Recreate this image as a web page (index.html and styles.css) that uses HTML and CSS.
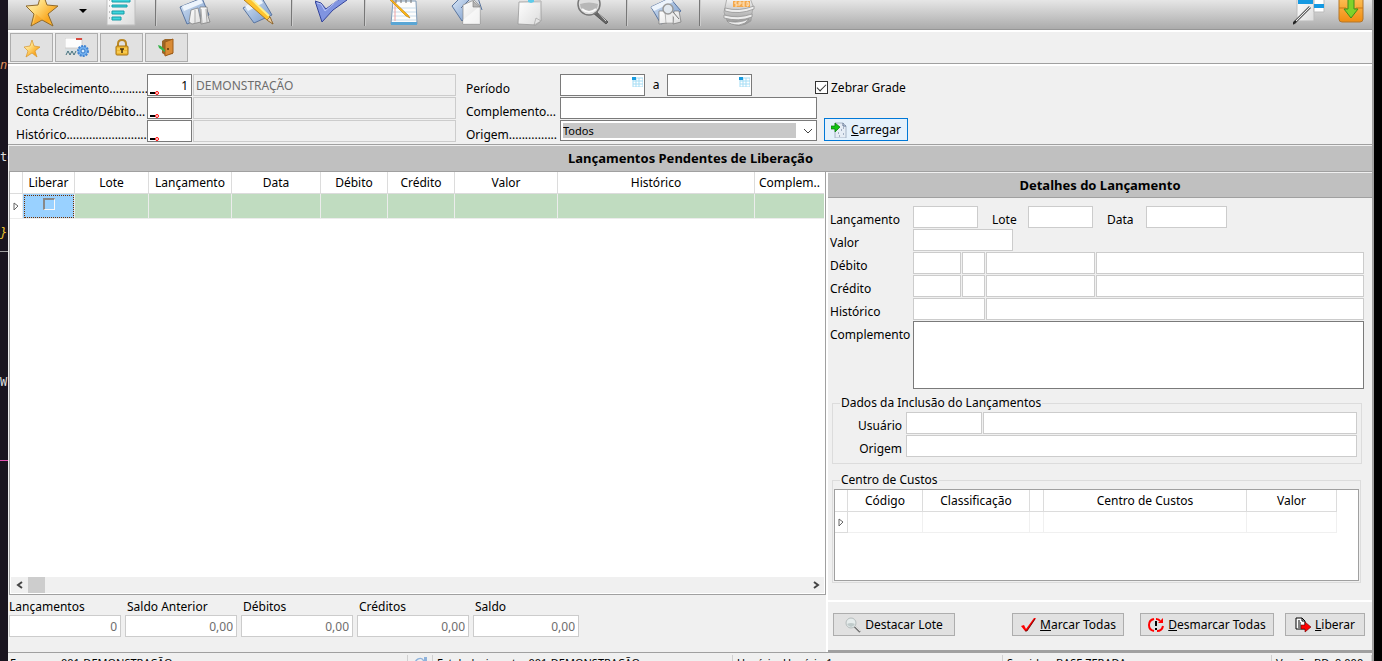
FILE: index.html
```html
<!DOCTYPE html>
<html lang="pt-BR">
<head>
<meta charset="utf-8">
<title>Lançamentos Pendentes de Liberação</title>
<link rel="stylesheet" href="styles.css">
</head>
<body>
<svg class="defs" aria-hidden="true">
  <defs>
    <linearGradient id="gold" x1="0" y1="0" x2="1" y2="1"><stop offset="0" stop-color="#fff6d8"/><stop offset=".4" stop-color="#ffdd7e"/><stop offset=".75" stop-color="#f9a51c"/><stop offset="1" stop-color="#ffc94f"/></linearGradient>
    <linearGradient id="blue" x1="0" y1="0" x2="1" y2="1"><stop offset="0" stop-color="#dce9f8"/><stop offset="1" stop-color="#7396c8"/></linearGradient>
    <linearGradient id="paper" x1="0" y1="0" x2="1" y2="1"><stop offset="0" stop-color="#ffffff"/><stop offset="1" stop-color="#dcdcdc"/></linearGradient>
    <linearGradient id="steel" x1="0" y1="0" x2="0" y2="1"><stop offset="0" stop-color="#f8f8f8"/><stop offset="1" stop-color="#909090"/></linearGradient>
    <linearGradient id="amber" x1="0" y1="0" x2="0" y2="1"><stop offset="0" stop-color="#ffc860"/><stop offset="1" stop-color="#f08c10"/></linearGradient>
  </defs>
</svg>
<div class="desktop">
  <aside class="editor" aria-hidden="true">
    <span class="editor-orange">n</span>
    <span class="editor-plain">to</span>
    <span class="editor-brace">}</span>
    <span class="editor-rule"></span>
    <span class="editor-word">Wh</span>
    <span class="editor-pink"></span>
  </aside>

  <div class="window">
    <nav class="toolbar" aria-label="Barra principal">
      <div class="group">
        <button class="tool tool-star" aria-label="Favoritos"><svg viewBox="0 0 32 30"><path d="M16-9l5 14 11 1-10 8 5 12-11-6-11 6 3-12-8-8 12-1z" fill="url(#gold)" stroke="#8f6a2c" stroke-width="1"/><path d="M16 19l-9 6 3-11z" fill="#f39a18" opacity=".5"/></svg></button>
        <button class="tool tool-arrow" aria-label="Abrir favoritos"><svg viewBox="0 0 32 30"><path d="M12 9h8l-4 4z" fill="#000"/></svg></button>
        <button class="tool tool-sheet" aria-label="Relatório"><svg viewBox="0 0 32 30"><path d="M2-2h28v27H2z" fill="url(#paper)" stroke="#bdbdbd"/><path d="M7-2h18v4H7zM7 5h15v2H7zM7 11h12v3H7zM7 17h9v3H7z" fill="#3fd5dc" stroke="#169ca8"/><path d="M4 0h1M4 6h1M4 12h1M4 18h1" stroke="#888"/></svg></button>
      </div>
      <div class="group">
        <button class="tool" aria-label="Abrir"><svg viewBox="0 0 32 30"><path d="M1 7L23-2l7 17-22 9z" fill="url(#blue)" stroke="#5a75a0"/><path d="M3 6l19-7 2 4-19 8z" fill="#edf4fc"/><path d="M12 10l7-2 3 14-9 2-3-2z" fill="url(#paper)" stroke="#777" stroke-width=".7"/><path d="M21 7h7l1 9 2 6-9 2z" fill="url(#paper)" stroke="#777" stroke-width=".7"/><path d="M16 10v13M22 9l1 14M27 9l1 13" stroke="#aaa"/></svg></button>
        <button class="tool" aria-label="Editar"><svg viewBox="0 0 32 30"><path d="M1 8L20-2l10 17-18 8z" fill="url(#blue)" stroke="#5a75a0"/><path d="M3 6l15-8 3 5-15 8z" fill="#eef4fb"/><path d="M7-2l-5 2 23 20 6 4-3-7z" fill="#ffc42e" stroke="#a3680d" stroke-width=".8"/><path d="M8-2l19 18" stroke="#fff08a" stroke-width="2"/><path d="M28 17l3 7-6-4z" fill="#eccb9c" stroke="#70502b" stroke-width=".6"/></svg></button>
      </div>
      <div class="group">
        <button class="tool" aria-label="Confirmar"><svg viewBox="0 0 32 30"><path d="M0 1l6 2 5 6L26-2l6 2-14 10-11 12z" fill="#8094e0" stroke="#34449a"/><path d="M2 3l4 1 4 7L24-1" fill="none" stroke="#b8c5f7"/></svg></button>
      </div>
      <div class="group">
        <button class="tool" aria-label="Anotações"><svg viewBox="0 0 32 30"><path d="M5 1h23l1 23H3z" fill="#fdfdfd" stroke="#7f9bb8"/><path d="M3 22h26v3H3z" fill="#5aa6d5"/><path d="M5 8h23M5 12h23M4 16h24M4 20h24" stroke="#c9dcea"/><path d="M7 1v20" stroke="#f0a0a0"/><path d="M8-2v5M13-2v5M18-2v5M23-2v5" stroke="#777" stroke-width="1"/><path d="M2-2l18 17 2 3-4-2L0-2z" fill="#ffb913" stroke="#b3750c" stroke-width=".6"/></svg></button>
        <button class="tool" aria-label="Arquivo"><svg viewBox="0 0 32 30"><path d="M1 6l8-8h13v12L11 21z" fill="url(#blue)" stroke="#59759e"/><path d="M10 8L20-2h7l4 12" fill="#d0d6de" stroke="#59759e"/><path d="M12 5l11-5 6 6v18H12z" fill="url(#paper)" stroke="#888" stroke-width=".7"/><path d="M12 20L29 6v18H12z" fill="#fff" opacity=".6"/><path d="M22 1v6h7z" fill="#b5b5b5" stroke="#777" stroke-width=".6"/></svg></button>
        <button class="tool" aria-label="Colar"><svg viewBox="0 0 32 30"><path d="M5 2l22-1v20l-5 4-18-1z" fill="url(#paper)" stroke="#999" stroke-width=".8"/><path d="M6 2h21l-1 20" fill="none" stroke="#c8c8c8"/><path d="M20 25l2-7 5 3z" fill="#e4e4e4" stroke="#999" stroke-width=".6"/><path d="M14-2h6v4l-3 1-3-1z" fill="#5ecbea"/></svg></button>
        <button class="tool" aria-label="Pesquisar"><svg viewBox="0 0 32 30"><path d="M20 11l11 11-2 2-13-11z" fill="#666" stroke="#333" stroke-width=".6"/><path d="M21 12l8 9" stroke="#ddd"/><circle cx="12" cy="4" r="11" fill="#dedede" stroke="#777" stroke-width="1.5"/><path d="M3 4q9-3 18 0a9 9 0 0 1-18 0" fill="#b7b7b7"/><path d="M5 9q7 6 14 0" stroke="#f8f8f8" stroke-width="2" fill="none"/></svg></button>
      </div>
      <div class="group">
        <button class="tool" aria-label="Consultar"><svg viewBox="0 0 32 30"><path d="M1 7L20-2l11 13-20 13z" fill="url(#blue)" stroke="#5a75a0"/><path d="M1 7L20-2l3 4L4 11z" fill="#edf4fc"/><path d="M9 11h6l2 12-8 1zM24 11h5l2 11-8 2z" fill="url(#paper)" stroke="#777" stroke-width=".7"/><path d="M15 12h8v11h-7z" fill="#eee" stroke="#999" stroke-width=".6"/><circle cx="18" cy="9" r="5" fill="#e1e8ef" stroke="#999" stroke-width="1.5"/><path d="M22 13l6 6" stroke="#eee" stroke-width="3"/><path d="M23 12l6 7" stroke="#777"/></svg></button>
      </div>
      <div class="group group-last">
        <button class="tool" aria-label="SPED"><svg viewBox="0 0 32 30"><path d="M4-2h23l3 8-2 15q-12 9-24 0L1 12z" fill="url(#steel)" stroke="#999" stroke-width=".7"/><path d="M2 8q14 4 29-2v3q-15 6-29 2zM1 15q14 4 28-1v3q-13 5-28 1zM4 21q11 3 22-2-3 5-10 6-9 0-12-4z" fill="#ededed" stroke="#8d8d8d" stroke-width=".7"/><path d="M10 1h17v6H10z" fill="#f4a84b"/><path d="M12 6h2V4h-2V2h2M16 6V2h2v2h-2M22 2h-2v4h2M20 4h2M24 2h1l1 2-1 2h-1z" stroke="#fff0d8" stroke-width=".8" fill="none"/></svg></button>
      </div>
      <div class="group group-end">
        <button class="tool tool-end" aria-label="Janelas"><svg viewBox="0 0 32 30"><path d="M4-2h17v23H4z" fill="url(#paper)" stroke="#bbb"/><path d="M5-2h15v6H5z" fill="#1599e2"/><path d="M21-2h10v14H21z" fill="#fff" stroke="#bbb"/><path d="M21 4h10v4H21z" fill="#1599e2"/><path d="M1 23L17 7" stroke="#666" stroke-width="3"/><path d="M3 21L17 7" stroke="#eee"/><path d="M0 24l3-3" stroke="#222" stroke-width="2"/></svg></button>
        <button class="tool tool-end" aria-label="Baixar"><svg viewBox="0 0 32 30"><rect x="4" y="-6" width="24" height="28" rx="3" fill="url(#amber)" stroke="#b4762a"/><path d="M4 8h7l2 5h6l2-5h7" fill="none" stroke="#c77716"/><path d="M13-2h6v11h4l-7 9-7-9h4z" fill="#7fd22a" stroke="#3d8d1c"/></svg></button>
      </div>
    </nav>

    <div class="actions">
      <button class="action" aria-label="Adicionar aos favoritos"><svg viewBox="0 0 24 20"><path d="M12 2l2 6 6 1-5 4 2 6-5-4-6 4 2-6-4-4 6-1z" fill="url(#gold)" stroke="#d9952b" stroke-width=".7"/></svg></button>
      <button class="action" aria-label="Configurar"><svg viewBox="0 0 24 20"><path d="M0 0h17v10H0z" fill="#fdfdfd" stroke="#bbb" stroke-width=".6"/><path d="M11 0h6v2h-6z" fill="#d84a40"/><path d="M0 11h13v4H0z" fill="#d8dfe2"/><path d="M1 17l2-4 2 4 2-4 2 4 2-4" fill="none" stroke="#44707c"/><circle cx="18" cy="13" r="5" fill="#72b0ef" stroke="#4385d2" stroke-width="2" stroke-dasharray="2 1"/><circle cx="18" cy="13" r="2" fill="#d9ecff" stroke="#397bc9"/></svg></button>
      <button class="action" aria-label="Bloquear"><svg viewBox="0 0 24 20"><path d="M8 10V6q0-4 4-4t4 4v4" fill="none" stroke="#b98724" stroke-width="2"/><rect x="6" y="8" width="12" height="9" rx="1" fill="#efb832" stroke="#a77312"/><path d="M7 11h10M7 14h10" stroke="#ffdc72"/><path d="M10 11h4M12 11v4" stroke="#493208" stroke-width="1.5"/></svg></button>
      <button class="action" aria-label="Sair"><svg viewBox="0 0 24 20"><path d="M7 3l3-2h8v15l-8 1-3-2z" fill="#9a6628"/><path d="M10 4l8-3v14l-8 3z" fill="#d98b35" stroke="#9e5c18"/><circle cx="13" cy="11" r="1" fill="#613307"/><path d="M3 7l3 1 4 4v2L4 10z" fill="#37b34a"/></svg></button>
    </div>

    <form class="filters">
      <div class="filter-account">
        <label for="estab">Estabelecimento............</label>
        <span class="lookup"><input id="estab" class="field number" value="1"><svg viewBox="0 0 10 5"><path d="M0 2h5v2H0z" fill="#000"/><circle cx="7" cy="3" r="1.5" fill="#fff" stroke="#f00"/></svg></span>
        <input class="field off" value="DEMONSTRAÇÃO" aria-label="Nome do estabelecimento" disabled>
        <label for="conta">Conta Crédito/Débito...</label>
        <span class="lookup"><input id="conta" class="field number"><svg viewBox="0 0 10 5"><path d="M0 2h5v2H0z" fill="#000"/><circle cx="7" cy="3" r="1.5" fill="#fff" stroke="#f00"/></svg></span>
        <input class="field off" aria-label="Nome da conta" disabled>
        <label for="hist">Histórico.........................</label>
        <span class="lookup"><input id="hist" class="field number"><svg viewBox="0 0 10 5"><path d="M0 2h5v2H0z" fill="#000"/><circle cx="7" cy="3" r="1.5" fill="#fff" stroke="#f00"/></svg></span>
        <input class="field off" aria-label="Nome do histórico" disabled>
      </div>
      <div class="filter-period">
        <label for="inicio">Período</label>
        <div class="period">
          <span class="date"><input id="inicio" class="field"><svg viewBox="0 0 11 10"><path d="M1 1h10v9H1zM1 4h10M1 7h10M4 1v9M7 1v9" fill="#fff" stroke="#a5ddf5"/><path d="M0 0h4v3H0z" fill="#1a9ce0"/></svg></span>
          <label class="until" for="fim">a</label>
          <span class="date"><input id="fim" class="field"><svg viewBox="0 0 11 10"><path d="M1 1h10v9H1zM1 4h10M1 7h10M4 1v9M7 1v9" fill="#fff" stroke="#a5ddf5"/><path d="M0 0h4v3H0z" fill="#1a9ce0"/></svg></span>
          <label class="zebra"><input type="checkbox" checked>Zebrar Grade</label>
        </div>
        <label for="compl">Complemento...</label>
        <input id="compl" class="field">
        <span></span>
        <label for="origem">Origem...............</label>
        <span class="combo"><select id="origem"><option>Todos</option></select><svg viewBox="0 0 10 6"><path d="M1 1l4 4 4-4" fill="none" stroke="#444"/></svg></span>
        <button type="button" class="push load"><svg viewBox="0 0 16 16"><path d="M4 1h8l3 3v12H4z" fill="#e6edf5" stroke="#a6b4c6"/><path d="M12 1v3h3M7 11h1M10 8h1M12 12h1M8 14h1M12 6h1M6 7h1" stroke="#5f7392" fill="none"/><path d="M0 4h4V1l5 4-5 5V7H0z" fill="#12c412" stroke="#087a08" stroke-width=".7"/></svg><span><u>C</u>arregar</span></button>
      </div>
    </form>

    <h1 class="title">Lançamentos Pendentes de Liberação</h1>

    <main class="main">
      <section class="entries">
        <div class="grid">
          <div class="grid-view">
            <table class="entries-table">
              <colgroup><col class="w13"><col class="w52"><col class="w74"><col class="w83"><col class="w89"><col class="w67"><col class="w67"><col class="w103"><col class="w197"><col></colgroup>
              <thead><tr><th></th><th>Liberar</th><th>Lote</th><th>Lançamento</th><th>Data</th><th>Débito</th><th>Crédito</th><th>Valor</th><th>Histórico</th><th>Complem..</th></tr></thead>
              <tbody><tr><td class="marker"><svg viewBox="0 0 6 9"><path d="M1 1l4 3-4 4z" fill="#fff" stroke="#666"/></svg></td><td class="chosen"><input type="checkbox" aria-label="Liberar lançamento"></td><td></td><td></td><td></td><td></td><td></td><td></td><td></td><td></td></tr></tbody>
            </table>
          </div>
          <div class="scroll">
            <button aria-label="Rolar à esquerda"><svg viewBox="0 0 8 8"><path d="M6 1L2 4l4 3" fill="none" stroke="#444" stroke-width="2"/></svg></button>
            <span class="thumb"></span>
            <button class="scroll-right" aria-label="Rolar à direita"><svg viewBox="0 0 8 8"><path d="M2 1l4 3-4 3" fill="none" stroke="#444" stroke-width="2"/></svg></button>
          </div>
        </div>
        <div class="totals">
          <div class="total"><label class="flush" for="t1">Lançamentos</label><input id="t1" class="field soft number" value="0" readonly></div>
          <div class="total"><label for="t2">Saldo Anterior</label><input id="t2" class="field soft number" value="0,00" readonly></div>
          <div class="total"><label for="t3">Débitos</label><input id="t3" class="field soft number" value="0,00" readonly></div>
          <div class="total"><label for="t4">Créditos</label><input id="t4" class="field soft number" value="0,00" readonly></div>
          <div class="total total-short"><label for="t5">Saldo</label><input id="t5" class="field soft number" value="0,00" readonly></div>
        </div>
      </section>

      <section class="details">
        <h2 class="title title-sub">Detalhes do Lançamento</h2>
        <div class="form">
          <label for="d1">Lançamento</label>
          <div class="line"><input id="d1" class="field soft w65" readonly><label class="mid" for="d2">Lote</label><input id="d2" class="field soft w65" readonly><label class="mid mid-wide" for="d3">Data</label><input id="d3" class="field soft w81" readonly></div>
          <label for="d4">Valor</label>
          <div class="line"><input id="d4" class="field soft w100" readonly></div>
          <label for="d5">Débito</label>
          <div class="line"><input id="d5" class="field soft w48" readonly><input class="field soft w23" aria-label="Dígito do débito" readonly><input class="field soft w109" aria-label="Classificação do débito" readonly><input class="field soft grow" aria-label="Conta de débito" readonly></div>
          <label for="d6">Crédito</label>
          <div class="line"><input id="d6" class="field soft w48" readonly><input class="field soft w23" aria-label="Dígito do crédito" readonly><input class="field soft w109" aria-label="Classificação do crédito" readonly><input class="field soft grow" aria-label="Conta de crédito" readonly></div>
          <label for="d7">Histórico</label>
          <div class="line"><input id="d7" class="field soft w72" readonly><input class="field soft grow" aria-label="Descrição do histórico" readonly></div>
          <label for="d8">Complemento</label>
          <textarea id="d8" class="field"></textarea>
        </div>
        <fieldset>
          <legend>Dados da Inclusão do Lançamentos</legend>
          <div class="origin">
            <label for="u1">Usuário</label>
            <div class="line"><input id="u1" class="field soft w76" readonly><input class="field soft grow" aria-label="Nome do usuário" readonly></div>
            <label for="u2">Origem</label>
            <div class="line"><input id="u2" class="field soft grow" readonly></div>
          </div>
        </fieldset>
        <fieldset class="costs">
          <legend>Centro de Custos</legend>
          <div class="costs-box">
            <table class="costs-table">
              <colgroup><col class="w13"><col class="w75"><col class="w107"><col class="w14"><col class="w203"><col class="w90"></colgroup>
              <thead><tr><th></th><th>Código</th><th>Classificação</th><th></th><th>Centro de Custos</th><th>Valor</th></tr></thead>
              <tbody><tr><td class="marker"><svg viewBox="0 0 6 9"><path d="M1 1l4 3-4 4z" fill="#fff" stroke="#666"/></svg></td><td></td><td></td><td></td><td></td><td></td></tr></tbody>
            </table>
          </div>
        </fieldset>
        <div class="commands">
          <button class="push detach"><svg viewBox="0 0 16 16"><path d="M9 9l6 6" stroke="#777" stroke-width="2"/><path d="M10 9l5 5" stroke="#ddd"/><circle cx="6" cy="6" r="5" fill="#e6ecec" stroke="#b5bcbc"/><path d="M2 7q4-2 8 0-4 6-8 0" fill="#bfcaca"/></svg><span>Destacar Lote</span></button>
          <button class="push mark"><svg viewBox="0 0 16 16"><path d="M1 9l3-1 2 4 8-11h2L7 14H5z" fill="#f00"/><path d="M15 2L7 14H5" fill="none" stroke="#500" stroke-width=".8"/></svg><span><u>M</u>arcar Todas</span></button>
          <button class="push unmark"><svg viewBox="0 0 16 16"><path d="M6 2Q1 3 1 8t5 6M9 14q5 0 6-5M8 2q3 0 4 2" fill="none" stroke="#f00" stroke-width="2"/><path d="M15 1v5h-5z" fill="#f00"/><path d="M8 4v5M8 11v2" stroke="#000" stroke-width="2"/></svg><span><u>D</u>esmarcar Todas</span></button>
          <button class="push release"><svg viewBox="0 0 16 16"><path d="M1 1h6l3 3v8H1z" fill="#fff" stroke="#000"/><path d="M7 1v3h3M3 4h2M3 6h3M3 8h3M3 10h3" fill="none" stroke="#000"/><path d="M6 8h4V5l6 5-6 5v-3H6z" fill="#f00" stroke="#600" stroke-width=".6"/></svg><span><u>L</u>iberar</span></button>
        </div>
      </section>
    </main>

    <footer class="status">
      <span class="st-company">Empresa: 001-DEMONSTRAÇÃO</span>
      <span class="st-icon"><svg viewBox="0 0 14 14"><path d="M2 7a5 5 0 0 1 9-4V0h3v7H8V5l2-1a3 3 0 0 0-6 3z" fill="#8fb3dc"/></svg></span>
      <span class="st-branch">Estabelecimento: 001-DEMONSTRAÇÃO</span>
      <span class="st-user">Usuário: Usuário 1</span>
      <span class="st-server">Servidor: BASE ZERADA</span>
      <span class="st-version">Versão BD: 9.000</span>
    </footer>
  </div>
</div>
</body>
</html>
```
FILE: styles.css
```css
* { box-sizing: border-box; }

body {
  margin: 0;
  height: 100vh;
  overflow: hidden;
  background: #000;
  color: #000;
  font: 12px/16px "Noto Sans", Tahoma, sans-serif;
}

button, input, select, textarea { font: inherit; color: inherit; margin: 0; border-radius: 0; }
button { padding: 0; }
svg { display: block; flex: none; }
.defs { position: absolute; width: 0; height: 0; }

.desktop {
  display: grid;
  grid-template-columns: 8px minmax(0, 1fr) 8px;
  height: calc(100vh + 14px);
}

/* Editor window behind the application */
.editor {
  display: flex;
  flex-direction: column;
  overflow: hidden;
  background: #1a1520;
  color: #ddd;
  font: 12px/16px "DejaVu Sans Mono", monospace;
}
.editor-orange { margin-top: 57px; color: #e0915c; font-style: italic; }
.editor-plain { margin-top: 76px; }
.editor-brace { margin-top: 60px; color: #f0c830; font-style: italic; }
.editor-rule { margin-top: 10px; border-top: 1px solid #a0a0a0; }
.editor-word { margin-top: 122px; }
.editor-pink { margin-top: 70px; border-top: 1px solid #e050b0; }

.window {
  display: flex;
  flex-direction: column;
  min-width: 0;
  background: #f0f0f0;
  border-right: 2px solid #a0a0a0;
}

/* Main toolbar */
.toolbar {
  display: flex;
  height: 30px;
  flex: none;
  background: linear-gradient(#e6e6e6, #ababab);
  border-bottom: 1px solid #969696;
}
.group { display: flex; padding: 0 2px 0 7px; }
.group:not(.group-last):not(.group-end) { border-right: 1px solid #777; box-shadow: 1px 0 #ccc; margin-bottom: 3px; }
.tool { width: 63px; height: 29px; border: 0; background: none; display: flex; justify-content: center; }
.tool svg { width: 32px; height: 30px; }
.tool-star { width: 54px; }
.tool-arrow { width: 28px; }
.tool-sheet { width: 48px; margin-right: 8px; }
.group-end { margin-left: auto; padding: 0; }
.tool-end { width: 42px; }

.actions {
  display: flex;
  gap: 2px;
  height: 34px;
  padding: 3px 2px 0;
  flex: none;
  border-top: 2px solid #fff;
  border-bottom: 1px solid #a0a0a0;
}
.action {
  display: flex;
  align-items: center;
  justify-content: center;
  width: 43px;
  height: 29px;
  margin-top: -2px;
  background: #e1e1e1;
  border: 1px solid #adadad;
}
.action svg { width: 24px; height: 20px; }

/* Filters */
.filters {
  display: flex;
  gap: 10px;
  flex: none;
  padding: 8px 8px 2px;
  border-top: 2px solid #fff;
  border-bottom: 1px solid #a0a0a0;
}
.field {
  display: block;
  width: 100%;
  min-width: 0;
  height: 22px;
  padding: 0 3px;
  background: #fff;
  border: 1px solid #7a7a7a;
  outline: 0;
}
.soft { border-color: #ccc; color: #6d6d6d; }
.off { background: #f0f0f0; border-color: #ccc; color: #6d6d6d; padding: 0 2px; }
.number { text-align: right; }

.filter-account { display: grid; grid-template-columns: 131px 45px 264px; row-gap: 1px; }
.filter-account .off { margin-left: 1px; width: 263px; }
.filter-account label, .filter-period > label { padding-top: 7px; height: 22px; line-height: 15px; white-space: nowrap; }
.lookup, .date, .combo { position: relative; display: block; }
.lookup svg { position: absolute; left: 3px; bottom: 1px; width: 10px; height: 5px; }
.date { width: 85px; }
.date svg { position: absolute; right: 2px; top: 3px; width: 11px; height: 10px; }

.filter-period { display: grid; grid-template-columns: 94px 257px auto; row-gap: 1px; }
.period { display: flex; grid-column: 2 / 4; }
.until { width: 22px; text-align: center; line-height: 22px; }
.zebra { display: flex; align-items: center; gap: 3px; margin-left: 63px; padding-top: 5px; white-space: nowrap; }
.zebra input {
  appearance: none;
  width: 13px;
  height: 13px;
  background: #fff;
  border: 1px solid #333;
  display: grid;
  place-items: center;
}
.zebra input:checked::before {
  content: "";
  width: 8px;
  height: 4px;
  border: solid #333;
  border-width: 0 0 1px 1px;
  margin-bottom: 3px;
  transform: rotate(-45deg);
}
.combo select {
  appearance: none;
  display: block;
  width: 100%;
  height: 21px;
  padding: 0 2px;
  border: 1px solid #7a7a7a;
  background: linear-gradient(#c8c8c8, #c8c8c8) 2px 2px / calc(100% - 22px) 15px no-repeat #fff;
  font-size: 11px;
}
.combo svg { position: absolute; right: 4px; top: 8px; width: 10px; height: 6px; pointer-events: none; }

.push {
  display: flex;
  align-items: center;
  justify-content: center;
  gap: 4px;
  height: 23px;
  background: #e1e1e1;
  border: 1px solid #adadad;
  white-space: nowrap;
}
.push svg { width: 16px; height: 16px; }
.load { width: 84px; margin: -2px 0 0 7px; background: #e5f1fb; border-color: #0078d7; }

.title {
  margin: 1px 0 0 1px;
  padding: 4px 0;
  flex: none;
  background: #c0c0c0;
  border-bottom: 1px solid #a0a0a0;
  font-size: 13px;
  line-height: 17px;
  text-align: center;
}
.title-sub { margin: 1px 0 0; padding-bottom: 3px; }

/* Entries grid and details */
.main {
  flex: 1;
  min-height: 0;
  display: grid;
  grid-template-columns: minmax(0, 1fr) 546px;
}
.entries { display: flex; flex-direction: column; padding-left: 1px; min-width: 0; }
.grid {
  flex: 1;
  display: flex;
  flex-direction: column;
  background: #fff;
  border: 1px solid #a0a0a0;
  border-top: 0;
}
.grid-view { flex: 1; padding-right: 1px; }

table { border-collapse: separate; border-spacing: 0; table-layout: fixed; }
th, td { padding: 0; overflow: hidden; border-right: 1px solid #dcdcdc; border-bottom: 1px solid #dcdcdc; text-align: center; white-space: nowrap; }
th { height: 22px; padding-top: 1px; font-weight: normal; }
td { height: 25px; }
.entries-table { width: 100%; }
.entries-table th:last-child, .entries-table td:last-child { border-right: 0; }
.entries-table td { background: #c0dcc0; border-color: #ececec; }
.entries-table .marker { background: #fff; }
.entries-table .chosen { background: #99d1ff; outline: 1px dotted #733000; outline-offset: -2px; }
.marker svg { width: 6px; height: 9px; margin: 0 auto; }
.chosen input {
  appearance: none;
  display: block;
  width: 12px;
  height: 12px;
  margin: 0 auto 4px;
  border: 1px solid #f8f8f8;
  border-top: 2px solid #888;
  border-left: 2px solid #888;
}
.w13 { width: 13px; } .w14 { width: 14px; } .w52 { width: 52px; } .w67 { width: 67px; }
.w74 { width: 74px; } .w75 { width: 75px; } .w83 { width: 83px; } .w89 { width: 89px; }
.w90 { width: 90px; } .w103 { width: 103px; } .w107 { width: 107px; } .w197 { width: 197px; }
.w203 { width: 203px; }

.scroll { display: flex; height: 16px; margin: 0 1px 1px; background: #f0f0f0; }
.scroll button { width: 17px; border: 0; background: none; display: grid; place-items: center; }
.scroll svg { width: 8px; height: 8px; }
.thumb { width: 17px; background: #cdcdcd; }
.scroll-right { margin-left: auto; }

.totals { display: flex; gap: 4px; padding: 4px 0 15px; flex: none; }
.total { width: 112px; }
.total-short { width: 106px; }
.total label { display: block; padding-left: 2px; }
.total .flush { padding-left: 0; }

.details { display: flex; flex-direction: column; border-left: 2px solid #fff; min-width: 0; }
.form { display: grid; grid-template-columns: 83px minmax(0, 1fr); row-gap: 1px; padding: 8px 8px 0 2px; }
.form > label, .origin > label { padding-top: 6px; }
.line { display: flex; gap: 1px; }
.line .field { flex: none; }
.line .grow { flex: 1; }
.mid { width: 48px; padding: 6px 0 0 13px; }
.mid-wide { width: 51px; }
.w23 { width: 23px; } .w48 { width: 48px; } .w65 { width: 65px; } .w72 { width: 72px; }
.w76 { width: 76px; } .w81 { width: 81px; } .w100 { width: 100px; } .w109 { width: 109px; }
.form textarea { height: 68px; resize: none; }

fieldset { min-width: 0; margin: 6px 10px 0 4px; padding: 1px 4px 6px 7px; border: 1px solid #dcdcdc; }
legend { padding: 0 1px; line-height: 16px; }
.origin { display: grid; grid-template-columns: 66px minmax(0, 1fr); row-gap: 1px; }
.origin > label { text-align: right; padding-right: 4px; }

.costs { margin: 8px 11px 0 4px; padding: 1px; }
.costs legend { margin-left: 6px; }
.costs-box { height: 92px; padding: 0; background: #fff; border: 1px solid #a0a0a0; overflow: hidden; }
.costs-table { width: 502px; max-width: 100%; }
.costs-table td { height: 21px; border-color: #f0f0f0; }
.costs-table .marker { border-color: #dcdcdc; }

.commands {
  display: flex;
  margin-top: auto;
  padding: 11px 7px 14px 5px;
  border-top: 2px solid #fff;
  border-bottom: 2px solid #a0a0a0;
}
.detach { width: 122px; margin-right: auto; }
.mark { width: 112px; margin-right: 16px; }
.unmark { width: 134px; margin-right: 11px; }
.release { width: 80px; }

.status {
  display: flex;
  flex: none;
  height: 23px;
  border-top: 1px solid #a0a0a0;
  font-size: 11px;
  line-height: 16px;
  white-space: nowrap;
}
.status span { overflow: hidden; margin-top: 2px; padding: 0 2px; border-right: 1px solid #d0d0d0; }
.status svg { width: 14px; height: 14px; margin: 2px auto; }
.st-company { width: 400px; }
.status .st-icon { width: 25px; }
.st-branch { width: 300px; }
.status .st-branch, .status .st-user, .status .st-server, .status .st-version { padding-left: 4px; }
.st-user { width: 270px; }
.st-server { flex: 1; }
.st-version { width: 100px; }
```
